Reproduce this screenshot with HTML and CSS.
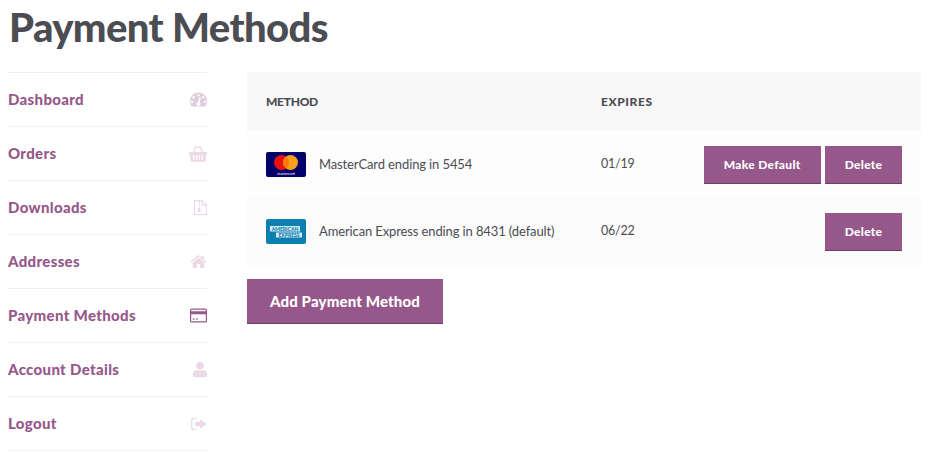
FILE: index.html
```html
<!DOCTYPE html>
<html lang="en">
<head>
    <meta charset="UTF-8">
    <title>Payment Methods</title>
    <link rel="stylesheet" href="styles.css">
</head>
<body>
    <h1>Payment Methods</h1>

    <div class="account">
        <!-- Account menu -->
        <ul class="account-nav">
            <li>
                <a href="#">Dashboard</a>
                <svg class="nav-icon" viewBox="0 0 16 14"><path fill-rule="evenodd" d="M8 0.5a8 8 0 0 0-8 8c0 1.9.6 3.6 1.7 5h12.6A8 8 0 0 0 16 8.500a8 8 0 0 0-8-8zM8 2a1.100 1.100 0 1 1 0 2.200A1.100 1.100 0 0 1 8 2zM3.500 3.800a1.100 1.100 0 1 1 0 2.200 1.100 1.100 0 0 1 0-2.200zM12.500 3.800a1.100 1.100 0 1 1 0 2.200 1.100 1.100 0 0 1 0-2.200zM2 8a1.100 1.100 0 1 1 0 2.200A1.100 1.100 0 0 1 2 8zM14 8a1.100 1.100 0 1 1 0 2.200A1.100 1.100 0 0 1 14 8zM9.300 4.500l.9.300-1 5a1.800 1.800 0 1 1-1.700-.4z"/></svg>
            </li>
            <li>
                <a href="#">Orders</a>
                <svg class="nav-icon basket-icon" viewBox="0 0 18 16"><path fill-rule="evenodd" d="M4.200 6L5.500 1.800A2 2 0 0 1 7.300.5h3.400a2 2 0 0 1 1.800 1.300L13.800 6h-1.400l-1.200-3.800a.8.8 0 0 0-.7-.5H7.500a.8.8 0 0 0-.7.500L5.600 6zM0 6h18v2h-.6l-1 6.500a1.500 1.500 0 0 1-1.500 1.300H3.100a1.500 1.500 0 0 1-1.500-1.300L.6 8H0zM4 9v5h1.300V9zM7 9v5h1.300V9zM9.800 9v5h1.300V9zM12.700 9v5H14V9z"/></svg>
            </li>
            <li>
                <a href="#">Downloads</a>
                <svg class="nav-icon" viewBox="0 0 14 16"><path fill-rule="evenodd" d="M0 0h9l5 5v11H0zM1.200 1.200v13.600h11.600V6H8V1.200H6.500v1H5.300v-1zM5.300 2.200h1.200v1H5.300zM4.300 3.200h1v1h-1zM5.300 4.200h1.200v1H5.300zM4.300 5.200h1v1h-1zM5.300 6.200h1.200v1H5.300zM4.500 8h2l.7 3.500a1.700 1.700 0 1 1-3.400 0zM9.200 1.700V4.800h3.100z"/></svg>
            </li>
            <li>
                <a href="#">Addresses</a>
                <svg class="nav-icon" viewBox="0 0 16 13"><path d="M8 3l5.500 4.500V12a.7.7 0 0 1-.7.700H9.500V9h-3v3.700H3.200a.7.7 0 0 1-.7-.7V7.500zM8 .3l3 2.400V1h2v3.300l2.700 2.200-.8.900L8 1.900 1.100 7.400.3 6.500z"/></svg>
            </li>
            <li class="active">
                <a href="#">Payment Methods</a>
                <svg class="nav-icon" viewBox="0 0 17 14"><path fill-rule="evenodd" d="M1.500 0h14A1.500 1.500 0 0 1 17 1.500v11a1.500 1.500 0 0 1-1.500 1.500h-14A1.500 1.500 0 0 1 0 12.500v-11A1.500 1.500 0 0 1 1.500 0zM1.200 1.200v1.600h14.600V1.200zM1.200 5.800v7h14.600v-7zM2.500 10h2.500v1H2.500zM6 10h2v1H6z"/></svg>
            </li>
            <li>
                <a href="#">Account Details</a>
                <svg class="nav-icon" viewBox="0 0 13 14"><path d="M6.500 0a3.500 3.500 0 1 1 0 7 3.500 3.500 0 0 1 0-7zM3.500 7.500c1.800 1 4.200 1 6 0 2 .2 3.500 1.700 3.500 3.700V12.500A1.500 1.500 0 0 1 11.500 14h-10A1.500 1.500 0 0 1 0 12.500v-1.300c0-2 1.500-3.500 3.500-3.700z"/></svg>
            </li>
            <li>
                <a href="#">Logout</a>
                <svg class="nav-icon logout-icon" viewBox="0 0 14 11"><path d="M1.800 0H5v1.200H2A.8.8 0 0 0 1.200 2v7c0 .4.400.8.800.8h3V11H1.800A1.800 1.800 0 0 1 0 9.200V1.800A1.800 1.800 0 0 1 1.800 0zM8.500 1L14 5.500 8.500 10V7.300H4V3.700h4.500z"/></svg>
            </li>
        </ul>

        <!-- Saved cards -->
        <div class="account-content">
            <table class="methods">
                <thead>
                    <tr>
                        <th class="col-method">Method</th>
                        <th class="col-expires">Expires</th>
                        <th></th>
                    </tr>
                </thead>
                <tbody>
                    <tr>
                        <td>
                            <div class="card-cell">
                                <svg class="card-logo" viewBox="0 0 40 25">
                                    <rect width="40" height="25" rx="2" fill="#00006b"/>
                                    <circle cx="15.500" cy="10.500" r="7.500" fill="#e8130f"/>
                                    <circle cx="24.500" cy="10.500" r="7.500" fill="#f79e1b"/>
                                    <path d="M20 4.500a7.500 7.500 0 0 1 0 12 7.500 7.500 0 0 1 0-12z" fill="#ff7a00"/>
                                    <text class="mc-name" x="20" y="22.500">mastercard</text>
                                </svg>
                                <span class="card-name">MasterCard ending in 5454</span>
                            </div>
                        </td>
                        <td class="date">01/19</td>
                        <td class="actions">
                            <a class="btn" href="#">Make Default</a>
                            <a class="btn" href="#">Delete</a>
                        </td>
                    </tr>
                    <tr>
                        <td>
                            <div class="card-cell">
                                <svg class="card-logo" viewBox="0 0 40 25">
                                    <rect width="40" height="25" rx="2" fill="#0a7fb0"/>
                                    <rect x="4" y="7" width="30" height="5.500" fill="#d5eaf3"/>
                                    <rect x="10" y="13.500" width="26" height="5" fill="#d5eaf3"/>
                                    <text class="amex-name" x="19" y="11.700">AMERICAN</text>
                                    <text class="amex-name" x="23" y="17.800">EXPRESS</text>
                                </svg>
                                <span class="card-name">American Express ending in 8431 (default)</span>
                            </div>
                        </td>
                        <td class="date">06/22</td>
                        <td class="actions">
                            <a class="btn" href="#">Delete</a>
                        </td>
                    </tr>
                </tbody>
            </table>
            <a class="btn btn-large" href="#">Add Payment Method</a>
        </div>
    </div>
</body>
</html>
```
FILE: styles.css
```css
body {
    margin: 0;
    padding: 0 17px 0 8px;
    font-family: Lato, "Noto Sans", Arial, sans-serif;
    color: #4b4d53;
    background-color: #fff;
}

h1 {
    margin: 0 0 19px 1px;
    height: 53px;
    font-size: 40px;
    line-height: 55px;
    font-weight: 900;
    letter-spacing: -0.6px;
}

.account {
    display: flex;
    gap: 40px;
}

.account-nav {
    width: 199px;
    flex-shrink: 0;
    margin: 0;
    padding: 0;
    list-style: none;
    border-top: 1px solid #f0f0f1;
}

.account-nav li {
    height: 53px;
    display: flex;
    justify-content: space-between;
    align-items: center;
    border-bottom: 1px solid #f0f0f1;
}

.account-nav a {
    position: relative;
    top: -1px;
    color: #96588a;
    font-size: 15px;
    font-weight: 900;
    letter-spacing: 0.33px;
    text-decoration: none;
}

.nav-icon {
    height: 15px;
    max-width: 17px;
    fill: #ead9e6;
}

.account-nav li:first-child .nav-icon {
    fill: #e0cddb;
}

.account-nav li.active .nav-icon {
    fill: #96588a;
}

.basket-icon {
    height: 16px;
    max-width: 18px;
}

.logout-icon {
    height: 12px;
    margin-right: 1px;
}

.account-content {
    flex: 1;
}

.methods {
    width: 100%;
    border-collapse: collapse;
    font-size: 13px;
    margin-bottom: 14px;
}

.methods th {
    height: 59px;
    padding: 0;
    background-color: #f8f8f8;
    text-align: left;
    font-size: 12px;
    font-weight: 900;
    text-transform: uppercase;
}

.methods th.col-method {
    width: 335px;
    padding-left: 19px;
    letter-spacing: -0.3px;
}

.methods th.col-expires {
    width: 90px;
    letter-spacing: 0.6px;
}

.methods td {
    height: 67px;
    padding: 0;
    background-color: #fbfbfb;
}

.methods td:first-child {
    padding-left: 19px;
}

.methods tbody tr:first-child td {
    background-color: #fdfdfd;
}

.card-cell {
    display: flex;
    align-items: center;
    gap: 13px;
    white-space: nowrap;
}

.card-name {
    position: relative;
    top: -1px;
    letter-spacing: -0.12px;
}

.methods td.date {
    height: 65px;
    padding-bottom: 2px;
    font-size: 12.5px;
    letter-spacing: -0.2px;
}

.card-logo {
    width: 40px;
    height: 25px;
}

.mc-name {
    font-size: 3.5px;
    font-weight: 700;
    fill: #d8d8ec;
    text-anchor: middle;
}

.amex-name {
    font-size: 5px;
    font-weight: 900;
    fill: #0a7fb0;
    text-anchor: middle;
}

.methods td.actions {
    padding-right: 19px;
    text-align: right;
    white-space: nowrap;
}

.btn {
    display: inline-block;
    box-sizing: border-box;
    height: 38px;
    line-height: 37px;
    background-color: #96588a;
    border-bottom: 1px solid #6d3f64;
    color: #fff;
    font-size: 12px;
    font-weight: 900;
    letter-spacing: 0.3px;
    text-decoration: none;
    text-align: center;
    width: 77px;
    vertical-align: top;
}

.actions .btn:first-child:not(:last-child) {
    width: 117px;
    margin-right: 1px;
}

.btn-large {
    height: 45px;
    width: 196px;
    line-height: 45px;
    font-size: 15px;
    letter-spacing: 0.15px;
}
```
